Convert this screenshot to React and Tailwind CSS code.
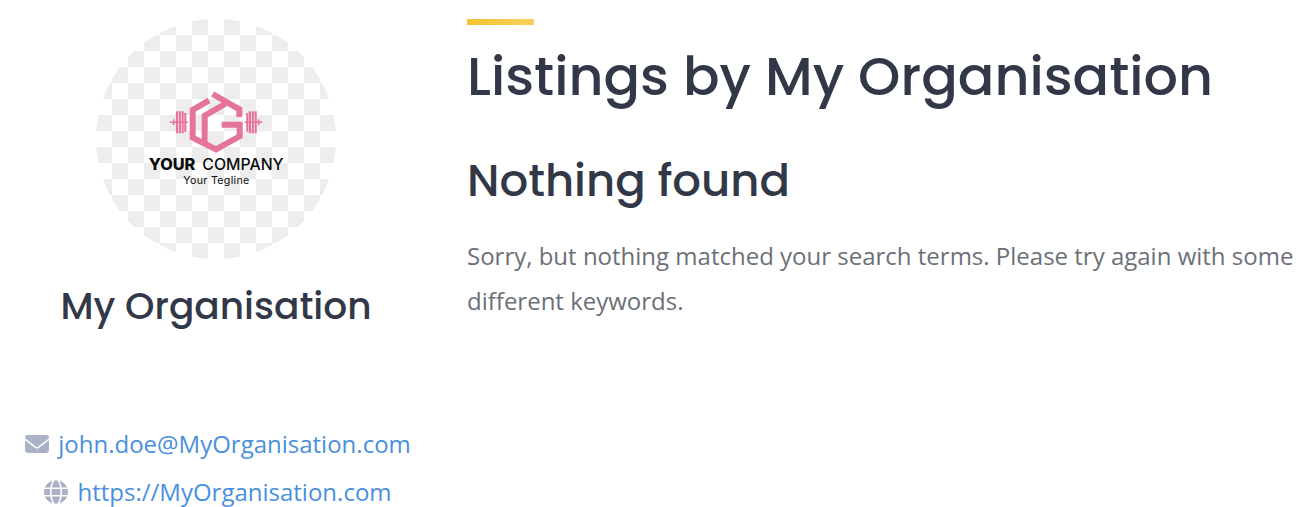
import { FaEnvelope, FaGlobe } from 'react-icons/fa6'

function Avatar() {
  return (
    <svg className="w-[240px] h-[240px] shrink-0 rounded-full" viewBox="0 0 240 240">
      <defs>
        <pattern id="checker" width="32" height="32" patternUnits="userSpaceOnUse">
          <path d="M0 0h16v16H0zM16 16h16v16H16z" fill="#ededed" />
        </pattern>
      </defs>
      <rect width="240" height="240" fill="url(#checker)" />
      <g transform="translate(44 66) scale(0.3333)">
        <g fill="none" stroke="#e5739c" strokeWidth="18">
          <path d="M207 46 158 75v83l70 35 71-39v-35h-54" />
          <path d="M194 176V92l66-38" />
          <path d="M218 27 298 73v23" />
        </g>
        <g fill="none" stroke="#e5739c" strokeWidth="6.5">
          <path d="M111 79v66M119.500 79v66M128 79v66M136 84v56M322 84v56M330 79v66M338.500 79v66M347 79v66" />
          <path d="M90 112h54M314 112h53M101 103v18M356 103v18" strokeWidth="4.5" />
        </g>
        <g className="font-['Inter',sans-serif]" fill="#0c0c0c">
          <text x="26" y="255" fontSize="46" fontWeight="800" textLength="140" lengthAdjust="spacingAndGlyphs">YOUR</text>
          <text x="187" y="255" fontSize="46" fontWeight="500" textLength="244" lengthAdjust="spacingAndGlyphs">COMPANY</text>
          <text x="130" y="297" fontSize="32" fontWeight="400" textLength="198">Your Tegline</text>
        </g>
      </g>
    </svg>
  )
}

function ContactLink({ icon: Icon, label, href }) {
  return (
    <a href={href} className="flex items-center gap-[9px] h-12 text-[24px] text-[#4a90dd] whitespace-nowrap">
      <Icon size={24} className="text-[#acb2c6]" />
      {label}
    </a>
  )
}

const heading = "font-['Poppins','Inter',sans-serif] font-medium text-[#323847] whitespace-nowrap [font-feature-settings:'cv11']"

export default function App() {
  return (
    <div className="flex w-[1303px] h-[507px] overflow-hidden bg-white font-['Open_Sans',sans-serif]">
      <aside className="flex flex-col items-center w-[432px] shrink-0 pt-[19px]">
        <Avatar />
        <h3 className={`${heading} mt-[23px] text-[37.5px] leading-[48px]`}>My Organisation</h3>
        <div className="flex flex-col items-center mt-[90px] pl-1">
          <ContactLink icon={FaEnvelope} label="john.doe@MyOrganisation.com" href="mailto:john.doe@MyOrganisation.com" />
          <ContactLink icon={FaGlobe} label="https://MyOrganisation.com" href="https://MyOrganisation.com" />
        </div>
      </aside>
      <main className="w-[836px] shrink-0 ml-[35px] pt-[19px]">
        <div className="w-[67px] h-[6px] bg-linear-to-r from-[#f5c430] to-[#f8d05c]" />
        <h1 className={`${heading} mt-[18px] text-[54px] leading-[66px]`}>Listings by My Organisation</h1>
        <h2 className={`${heading} mt-[42px] text-[45px] leading-[60px]`}>Nothing found</h2>
        <p className="mt-[22px] text-[24px] leading-[45px] text-[#6b7078] whitespace-nowrap">
          Sorry, but nothing matched your search terms. Please try again with some
          <br />
          different keywords.
        </p>
      </main>
    </div>
  )
}
